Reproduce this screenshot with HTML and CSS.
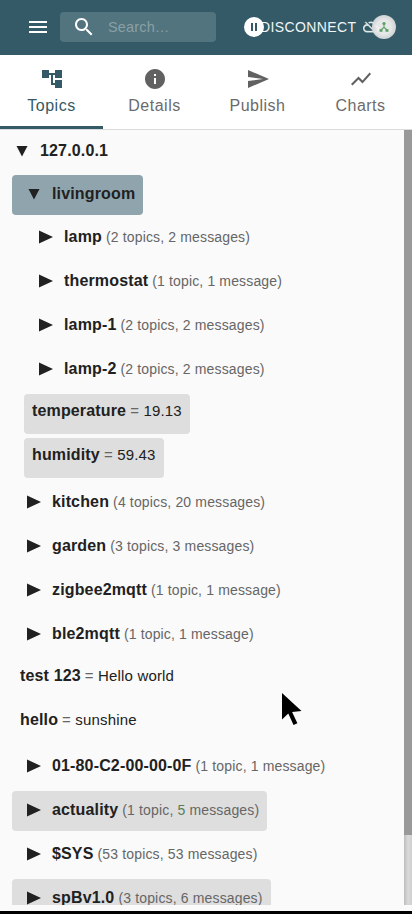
FILE: index.html
```
<!DOCTYPE html>
<html lang="en">
<head>
<meta charset="utf-8">
<title>Topics</title>
<link rel="stylesheet" href="styles.css">
</head>
<body>
<header class="bar">
  <svg class="menu" viewBox="0 0 24 24"><path d="M3 18h18v-2H3v2zm0-5h18v-2H3v2zm0-7v2h18V6H3z"/></svg>
  <div class="search">
    <svg viewBox="0 0 24 24"><path d="M15.5 14h-.79l-.28-.27C15.41 12.59 16 11.11 16 9.5 16 5.91 13.09 3 9.5 3S3 5.91 3 9.5 5.91 16 9.5 16c1.61 0 3.09-.59 4.23-1.57l.27.28v.79l5 4.99L20.49 19l-4.99-5zm-6 0C7.01 14 5 11.99 5 9.5S7.01 5 9.5 5 14 7.01 14 9.5 11.99 14 9.5 14z"/></svg>
    <span>Search…</span>
  </div>
  <div class="actions">
    <span class="disconnect">DISCONNECT</span>
    <svg class="cloud" viewBox="0 0 24 24"><path d="M19.35 10.04C18.67 6.59 15.64 4 12 4c-1.48 0-2.85.43-4.01 1.17l1.46 1.46C10.21 6.23 11.08 6 12 6c3.04 0 5.5 2.46 5.5 5.5v.5H19c1.66 0 3 1.34 3 3 0 1.13-.64 2.11-1.56 2.62l1.45 1.45C23.16 18.16 24 16.68 24 15c0-2.64-2.05-4.78-4.65-4.96zM3 5.27l2.75 2.74C2.56 8.15 0 10.77 0 14c0 3.31 2.69 6 6 6h11.73l2 2L21 20.73 4.27 4 3 5.27zM7.73 10l8 8H6c-2.21 0-4-1.79-4-4s1.79-4 4-4h1.73z"/></svg>
    <svg class="pause" viewBox="0 0 20 20"><circle cx="10" cy="10" r="10" fill="#fff"/><path d="M7 6h2v8H7zM11 6h2v8h-2z" fill="#335a66"/></svg>
    <svg class="status" viewBox="0 0 24 24"><defs><radialGradient id="g"><stop offset=".6" stop-color="#f0f0f0"/><stop offset="1" stop-color="#d6d9d9"/></radialGradient></defs><circle cx="12" cy="12" r="12" fill="url(#g)"/><path d="M12 8v4.200l-3.500 3.300M12 12.200l3.500 3.300" fill="none" stroke="#65a86c" stroke-width="1.200"/><g fill="#5da366"><circle cx="12" cy="8.500" r="1.600"/><path d="M7.500 14.200h3v2.600h-3zM13.500 14.200h3v2.600h-3z"/></g></svg>
  </div>
</header>
<nav class="tabs">
  <div class="tab active"><svg viewBox="0 0 24 24"><path d="M22 11V3h-7v3H9V3H2v8h7V8h2v10h4v3h7v-8h-7v3h-2V8h2v3z"/></svg><span>Topics</span></div>
  <div class="tab"><svg viewBox="0 0 24 24"><path d="M12 2C6.480 2 2 6.480 2 12s4.480 10 10 10 10-4.480 10-10S17.520 2 12 2zm1 15h-2v-6h2v6zm0-8h-2V7h2v2z"/></svg><span>Details</span></div>
  <div class="tab"><svg viewBox="0 0 24 24"><path d="M2.010 21L23 12 2.010 3 2 10l15 2-15 2z"/></svg><span>Publish</span></div>
  <div class="tab"><svg viewBox="0 0 24 24"><path d="M3.500 18.490l6-6.010 4 4L22 6.920l-1.410-1.410-7.090 7.970-4-4L2 16.990z"/></svg><span>Charts</span></div>
</nav>
<main class="view">
  <div class="tree">
    <div class="row root"><svg class="down" viewBox="0 0 12 12"><path d="M.500 1h11L6 11.500z"/></svg><b>127.0.0.1</b></div>
    <div class="row parent selected"><svg class="down" viewBox="0 0 12 12"><path d="M.500 1h11L6 11.500z"/></svg><b>livingroom</b></div>
    <div class="children">
      <div class="row"><svg class="right" viewBox="0 0 14 14"><path d="M0 .500v13L14 7z"/></svg><b>lamp</b><small>(2 topics, 2 messages)</small></div>
      <div class="row"><svg class="right" viewBox="0 0 14 14"><path d="M0 .500v13L14 7z"/></svg><b>thermostat</b><small>(1 topic, 1 message)</small></div>
      <div class="row"><svg class="right" viewBox="0 0 14 14"><path d="M0 .500v13L14 7z"/></svg><b>lamp-1</b><small>(2 topics, 2 messages)</small></div>
      <div class="row"><svg class="right" viewBox="0 0 14 14"><path d="M0 .500v13L14 7z"/></svg><b>lamp-2</b><small>(2 topics, 2 messages)</small></div>
      <div class="row leaf updated"><b>temperature</b><span class="value"><i>=</i> 19.13</span></div>
      <div class="row leaf updated"><b>humidity</b><span class="value"><i>=</i> 59.43</span></div>
    </div>
    <div class="row"><svg class="right" viewBox="0 0 14 14"><path d="M0 .500v13L14 7z"/></svg><b>kitchen</b><small>(4 topics, 20 messages)</small></div>
    <div class="row"><svg class="right" viewBox="0 0 14 14"><path d="M0 .500v13L14 7z"/></svg><b>garden</b><small>(3 topics, 3 messages)</small></div>
    <div class="row"><svg class="right" viewBox="0 0 14 14"><path d="M0 .500v13L14 7z"/></svg><b>zigbee2mqtt</b><small>(1 topic, 1 message)</small></div>
    <div class="row"><svg class="right" viewBox="0 0 14 14"><path d="M0 .500v13L14 7z"/></svg><b>ble2mqtt</b><small>(1 topic, 1 message)</small></div>
    <div class="row leaf"><b>test 123</b><span class="value"><i>=</i> Hello world</span></div>
    <div class="row leaf"><b>hello</b><span class="value"><i>=</i> sunshine</span></div>
    <div class="row"><svg class="right" viewBox="0 0 14 14"><path d="M0 .500v13L14 7z"/></svg><b>01-80-C2-00-00-0F</b><small>(1 topic, 1 message)</small></div>
    <div class="row updated"><svg class="right" viewBox="0 0 14 14"><path d="M0 .500v13L14 7z"/></svg><b>actuality</b><small>(1 topic, <em>5</em> messages)</small></div>
    <div class="row"><svg class="right" viewBox="0 0 14 14"><path d="M0 .500v13L14 7z"/></svg><b>$SYS</b><small>(53 topics, 53 messages)</small></div>
    <div class="row updated"><svg class="right" viewBox="0 0 14 14"><path d="M0 .500v13L14 7z"/></svg><b>spBv1.0</b><small>(3 topics, 6 messages)</small></div>
  </div>
  <div class="scroll"><div class="thumb"></div></div>
</main>
<footer class="edge"></footer>
<svg class="cursor" viewBox="0 0 20 33"><path d="M0 0v26.500l6.300-6 5.200 11.500 3.900-1.700-5.300-11.300L19.500 18z"/></svg>
</body>
</html>
```

FILE: styles.css
```
* { box-sizing: border-box; }
body {
  margin: 0; width: 412px; height: 914px; overflow: hidden;
  display: flex; flex-direction: column; position: relative;
  background: #fafafa; color: #212121;
  font-family: "Liberation Sans", Arial, sans-serif; font-size: 16px;
}
svg { display: block; flex: none; }
.bar { height: 55px; flex: none; background: #335a66; display: flex; align-items: center; padding: 0 16px 1px 26px; }
.menu { width: 24px; height: 24px; fill: #fff; }
.search {
  width: 156px; height: 30px; margin-left: 10px; padding: 0 0 1px 12px; border-radius: 4px;
  background: #52747e; display: flex; align-items: center; color: #89a0a7;
  font-size: 14.500px; letter-spacing: .15px;
}
.search svg { width: 24px; height: 24px; fill: #fff; margin-right: 12px; }
.actions { position: relative; margin-left: auto; width: 152px; height: 30px; display: flex; align-items: center; padding-left: 16px; }
.disconnect { color: #f1f5f6; font-size: 14px; letter-spacing: .4px; width: 98px; white-space: nowrap; }
.cloud { width: 16px; height: 16px; margin-left: 5px; fill: #e4eaeb; stroke: #e4eaeb; stroke-width: .5; }
.pause { position: absolute; left: 0; top: 5px; width: 20px; height: 20px; }
.status { position: absolute; right: 0; top: 3px; width: 24px; height: 24px; opacity: .95; }
.tabs { height: 75px; flex: none; display: flex; background: #fff; border-bottom: 1px solid #d9dbdc; }
.tab { flex: 1; display: flex; flex-direction: column; align-items: center; padding-top: 12px; color: #6b6b6b; letter-spacing: .5px; border-bottom: 3px solid transparent; }
.tab svg { width: 24px; height: 24px; fill: #616161; margin-bottom: 6px; }
.tab span { line-height: 18px; }
.tab.active { color: #335a66; border-color: #335a66; }
.tab.active svg { fill: #335a66; }
.view { height: 775px; flex: none; display: flex; overflow: hidden; }
.tree { flex: 1; padding: 1px 0 0 12px; display: flex; flex-direction: column; align-items: flex-start; }
.row { height: 40px; flex: none; margin-bottom: 4px; padding: 0 8px 2px 15px; display: flex; align-items: center; white-space: nowrap; border-radius: 4px; }
.row b { letter-spacing: .15px; }
.row small { font-size: 14px; letter-spacing: .15px; color: #666; margin-left: 4px; }
.row em { font-style: normal; color: #5a7c59; }
.right { width: 14px; height: 14px; margin-right: 11px; fill: #212121; }
.down { width: 12px; height: 12px; margin-right: 12px; fill: #212121; }
.root { padding: 0 8px 0 4px; }
.parent { padding-left: 16px; margin-bottom: 3px; }
.selected { background: #90a4ae; }
.children { padding-left: 12px; margin-bottom: 1px; display: flex; flex-direction: column; align-items: flex-start; }
.leaf { padding: 0 8px 6px; }
.value { margin-left: 4px; padding-bottom: 1px; font-size: 15px; letter-spacing: .17px; }
.value i { font-style: normal; color: #666; }
.updated { background: #dedede; }
.scroll { width: 8px; background: linear-gradient(to right, #bdbdbd, #dadada 50%, #cfcfcf); }
.thumb { height: 705px; background: #999; }
.edge { margin-top: auto; height: 3px; background: #000; }
.cursor { position: absolute; left: 282px; top: 693px; width: 20px; height: 33px; }
```
